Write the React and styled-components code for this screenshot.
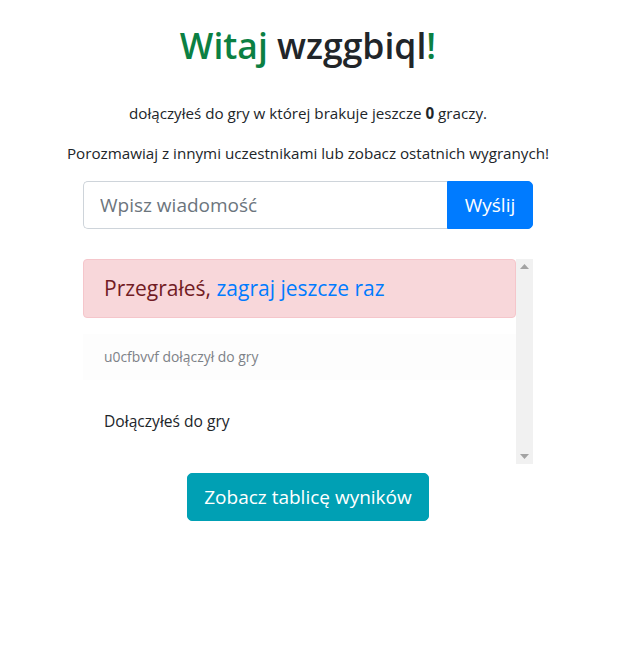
import React from "react";
import styled, { createGlobalStyle } from "styled-components";

const Global = createGlobalStyle`
  html, body { margin: 0; padding: 0; background: #fff; }
  body {
    font-family: "Open Sans", "Noto Sans", sans-serif;
    color: #212529;
    font-size: 15.2px;
    line-height: 1.5;
  }
  * { box-sizing: border-box; }
`;

const Page = styled.div`
  padding: 21px 8px 0 0;
  display: flex;
  flex-direction: column;
  align-items: center;
`;

const Container = styled.div`
  width: 450px;
  display: flex;
  flex-direction: column;
  align-items: center;
`;

const Title = styled.h1`
  margin: 0 0 32px;
  font-size: 35.5px;
  font-weight: 600;
  line-height: 48px;
  color: #212529;
  white-space: nowrap;
`;

const Green = styled.span`
  color: #0b8043;
`;

const Text = styled.p`
  margin: 0 0 16px;
  line-height: 24px;
  text-align: center;
  white-space: nowrap;
`;

const Form = styled.form`
  display: flex;
  width: 100%;
  height: 48px;
  margin-bottom: 30px;
`;

const Input = styled.input`
  flex: 1;
  min-width: 0;
  height: 48px;
  padding: 8px 16px;
  font: inherit;
  font-size: 19px;
  color: #495057;
  border: 1px solid #ced4da;
  border-right: none;
  border-radius: 5px 0 0 5px;
  outline: none;
  &::placeholder { color: #6c757d; opacity: 1; }
`;

const SendButton = styled.button`
  width: 86px;
  height: 48px;
  border: 1px solid #007bff;
  background: #007bff;
  color: #fff;
  font: inherit;
  font-size: 19px;
  border-radius: 0 5px 5px 0;
  padding: 0;
`;

const ChatBox = styled.div`
  display: flex;
  width: 100%;
  height: 205px;
  overflow: hidden;
  margin-bottom: 9px;
`;

const Messages = styled.div`
  flex: 1;
  min-width: 0;
  display: flex;
  flex-direction: column;
  gap: 16px;
`;

const Alert = styled.div`
  padding: 14px 20px;
  background: #f8d7da;
  border: 1px solid #f5c6cb;
  border-radius: 4px;
  color: #721c24;
  font-size: 21px;
  line-height: 29px;
`;

const Link = styled.a`
  color: #007bff;
  text-decoration: none;
`;

const Item = styled.div`
  padding: ${(p) => (p.$muted ? "12px 21px" : "13px 21px 12px")};
  background: ${(p) => (p.$muted ? "#fdfdfd" : "#fff")};
  color: ${(p) => (p.$muted ? "#7d8288" : "#212529")};
  font-size: ${(p) => (p.$muted ? "13.9px" : "15.6px")};
  line-height: ${(p) => (p.$muted ? "22px" : "25px")};
`;

const Track = styled.div`
  width: 17px;
  flex: none;
  background: #f1f1f1;
  display: flex;
  flex-direction: column;
  justify-content: space-between;
  align-items: center;
  padding: 5px 0;
`;

const InfoButton = styled.button`
  height: 48px;
  padding: 0 16px;
  border: 1px solid #00a0b4;
  background: #00a0b4;
  color: #fff;
  font: inherit;
  font-size: 19px;
  border-radius: 5px;
`;

export default function App() {
  return (
    <>
      <Global />
      <Page>
        <Container>
          <Title>
            <Green>Witaj</Green> wzggbiql<Green>!</Green>
          </Title>
          <Text>
            dołączyłeś do gry w której brakuje jeszcze <b>0</b> graczy.
          </Text>
          <Text>Porozmawiaj z innymi uczestnikami lub zobacz ostatnich wygranych!</Text>
          <Form onSubmit={(e) => e.preventDefault()}>
            <Input placeholder="Wpisz wiadomość" />
            <SendButton type="submit">Wyślij</SendButton>
          </Form>
          <ChatBox>
            <Messages>
              <Alert>
                Przegrałeś, <Link href="#">zagraj jeszcze raz</Link>
              </Alert>
              <Item $muted>u0cfbvvf dołączył do gry</Item>
              <Item>Dołączyłeś do gry</Item>
            </Messages>
            <Track>
              <svg width="9" height="5" viewBox="0 0 9 5"><path d="M0 5 L4.5 0 L9 5 Z" fill="#a3a3a3" /></svg>
              <svg width="9" height="5" viewBox="0 0 9 5"><path d="M0 0 L4.5 5 L9 0 Z" fill="#a3a3a3" /></svg>
            </Track>
          </ChatBox>
          <InfoButton>Zobacz tablicę wyników</InfoButton>
        </Container>
      </Page>
    </>
  );
}
